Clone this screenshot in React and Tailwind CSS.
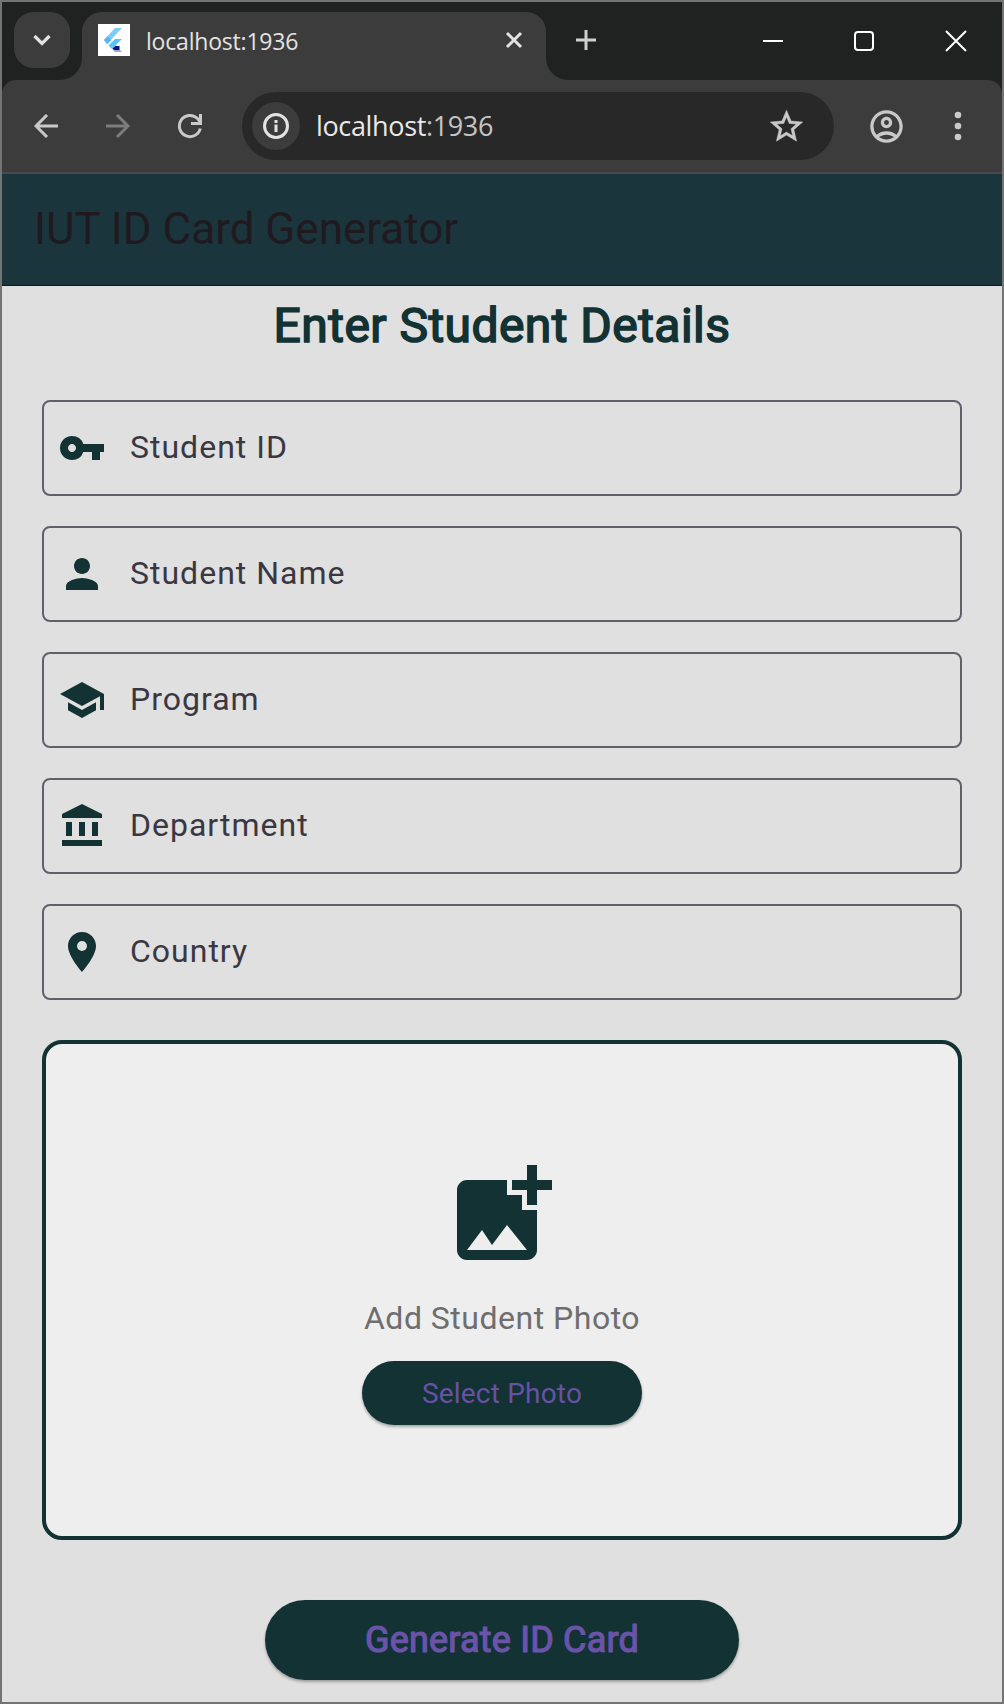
import React from "react";
import {
  MdVpnKey,
  MdPerson,
  MdSchool,
  MdLocationOn,
  MdAddPhotoAlternate,
  MdStarOutline,
  MdOutlineAccountCircle,
} from "react-icons/md";

function Stroke({ w, h, d, sw = 3, className = "" }) {
  return (
    <svg
      width={w}
      height={h}
      viewBox={`0 0 ${w} ${h}`}
      fill="none"
      stroke="currentColor"
      strokeWidth={sw}
      className={`shrink-0 ${className}`}
    >
      <path d={d} />
    </svg>
  );
}

function FlutterLogo() {
  return (
    <svg width="32" height="32" viewBox="0 0 32 32" className="shrink-0 bg-white">
      <path d="M6 16 17 4h7L9 20z" fill="#7accfb" />
      <path d="M6 16l3.500-3.800 4 4L9 20z" fill="#55b8f5" />
      <path d="M10.500 21.500 17 15h7l-6.500 6.500-3.500 3.500z" fill="#5cc1f8" />
      <path d="M14 25l3.500-3.500L24 28h-7z" fill="#9aa8cc" />
      <path d="M14.500 24.500l3-2.500h4v4h-5z" fill="#06128a" />
    </svg>
  );
}

function BankIcon() {
  return (
    <svg width="48" height="48" viewBox="0 0 24 24" fill="currentColor" className="shrink-0">
      <path d="M4 10h3v7H4zM10.500 10h3v7h-3zM17 10h3v7h-3zM2 19h20v3H2zM12 1 2 6v2h20V6z" />
    </svg>
  );
}

function TabStrip() {
  return (
    <div className="flex h-[78px] shrink-0 items-start bg-[#202221] pl-3">
      <button className="mt-2.5 flex size-14 items-center justify-center rounded-[20px] bg-[#3c3c3c] text-[#e3e3e3]">
        <Stroke w={18} h={12} d="M1.500 2 9 9.500 16.500 2" sw={3.2} />
      </button>
      <div className="relative mt-2.5 ml-3 flex h-[68px] w-[464px] items-start rounded-t-[20px] bg-[#3c3c3c] pt-3 pl-4 text-[#e3e3e3]">
        <svg className="absolute bottom-0 -left-[22px]" width="22" height="22" viewBox="0 0 22 22">
          <path d="M22 0v22H0A22 22 0 0 0 22 0z" fill="#3c3c3c" />
        </svg>
        <svg className="absolute -right-[22px] bottom-0" width="22" height="22" viewBox="0 0 22 22">
          <path d="M0 0v22h22A22 22 0 0 1 0 0z" fill="#3c3c3c" />
        </svg>
        <FlutterLogo />
        <span className="ml-4 font-['Open_Sans',sans-serif] text-[23px] leading-[34px] tracking-[-0.2px]">
          localhost:1936
        </span>
        <Stroke w={18} h={18} d="M2 2l14 14M16 2 2 16" sw={3} className="mt-[7px] mr-[23px] ml-auto" />
      </div>
      <Stroke w={20} h={20} d="M10 0v20M0 10h20" sw={3} className="mt-7 ml-[30px] text-[#d0d0d0]" />
      <div className="mt-7 mr-[35px] ml-auto flex items-center gap-[70px] text-white">
        <Stroke w={22} h={22} d="M2 11h20" sw={2} />
        <svg width="22" height="22" viewBox="0 0 22 22" fill="none" stroke="currentColor" strokeWidth="2">
          <rect x="2" y="2" width="18" height="18" rx="3" />
        </svg>
        <Stroke w={22} h={22} d="M1 1l20 20M21 1 1 21" sw={2} />
      </div>
    </div>
  );
}

function Toolbar() {
  return (
    <div className="h-[92px] shrink-0 bg-[#202221]">
      <div className="flex h-full items-center rounded-t-[14px] bg-[#3c3c3c] pl-8 text-[#c9c9c9]">
        <Stroke w={24} h={24} d="M24 12H2M13 1 2 12l11 11" sw={3} />
        <Stroke w={24} h={24} d="M0 12h22M11 1l11 11-11 11" sw={3} className="ml-12 text-[#7c7c7c]" />
        <Stroke
          w={26}
          h={26}
          d="M23.300 15.500A10.600 10.600 0 1 1 20.500 5.500L23 9M23.500 1v9.500H14"
          sw={3}
          className="ml-[47px]"
        />
        <div className="ml-[39px] flex h-[68px] w-[592px] items-center rounded-full bg-[#282828] pr-7 pl-2.5">
          <div className="flex size-12 items-center justify-center rounded-full bg-[#3c3c3c] text-[#e3e3e3]">
            <svg width="26" height="26" viewBox="0 0 26 26" fill="none" stroke="currentColor" strokeWidth="3">
              <circle cx="13" cy="13" r="11.500" />
              <path d="M13 11.500v7.500M13 7v3" />
            </svg>
          </div>
          <span className="ml-4 font-['Open_Sans',sans-serif] text-[27px] leading-9 tracking-[-0.35px] text-[#e8e8e8]">
            localhost<span className="text-[#c4c4c4]">:1936</span>
          </span>
          <MdStarOutline className="ml-auto size-[39px] stroke-current stroke-[0.3]" />
        </div>
        <MdOutlineAccountCircle className="ml-[33px] size-[39px]" />
        <svg width="8" height="30" viewBox="0 0 8 30" fill="currentColor" className="ml-12">
          <circle cx="4" cy="4" r="3.300" />
          <circle cx="4" cy="15" r="3.300" />
          <circle cx="4" cy="26" r="3.300" />
        </svg>
      </div>
    </div>
  );
}

function Field({ icon, label }) {
  return (
    <div className="flex h-24 items-center rounded-lg border-2 border-[#645e6a] pl-3.5">
      <span className="text-[#123233]">{icon}</span>
      <span className="mb-0.5 ml-6 text-[32px] leading-[46px] tracking-[1px] text-[#3b3742]">{label}</span>
    </div>
  );
}

const FIELDS = [
  ["Student ID", <MdVpnKey className="size-12" />],
  ["Student Name", <MdPerson className="size-12" />],
  ["Program", <MdSchool className="size-12" />],
  ["Department", <BankIcon />],
  ["Country", <MdLocationOn className="size-12" />],
];

export default function App() {
  return (
    <div className="flex h-[1704px] w-[1004px] flex-col overflow-hidden border-2 border-[#747474] bg-[#e0e0e0] font-['Roboto',sans-serif]">
      <TabStrip />
      <Toolbar />
      <header className="flex h-[114px] shrink-0 items-center border-t-2 border-b border-t-[#4a4a4a] border-b-[#06182a] bg-[#1a353b] pb-0.5 pl-8">
        <h1 className="text-[44px] leading-[56px] font-normal text-[#201a20]">IUT ID Card Generator</h1>
      </header>
      <main className="flex flex-col px-10">
        <h2 className="mt-2.5 text-center text-[48px] leading-[60px] font-normal tracking-[0.45px] text-[#123233] [-webkit-text-stroke:1.600px_#123233]">
          Enter Student Details
        </h2>
        <div className="mt-11 flex flex-col gap-[30px]">
          {FIELDS.map(([label, icon]) => (
            <Field key={label} label={label} icon={icon} />
          ))}
        </div>
        <section className="mt-10 flex h-[500px] flex-col items-center rounded-[20px] border-4 border-[#123233] bg-[#eeeeee] pt-[111px]">
          <MdAddPhotoAlternate className="size-[120px] text-[#123233]" />
          <p className="mt-5 text-[32px] leading-[46px] tracking-[0.5px] text-[#6e6e6e]">Add Student Photo</p>
          <button className="mt-5 h-16 w-[280px] rounded-full bg-[#123233] pt-0.5 text-[28px] leading-10 tracking-[0.2px] text-[#6851a4] shadow-[0_2px_3px_rgba(0,0,0,0.3)]">
            Select Photo
          </button>
        </section>
        <button className="mt-[60px] h-20 w-[474px] self-center rounded-full bg-[#123233] text-[36px] leading-[50px] tracking-[0.2px] text-[#6a53a8] shadow-[0_2px_3px_rgba(0,0,0,0.3)] [-webkit-text-stroke:1.200px_#6a53a8]">
          Generate ID Card
        </button>
      </main>
    </div>
  );
}
